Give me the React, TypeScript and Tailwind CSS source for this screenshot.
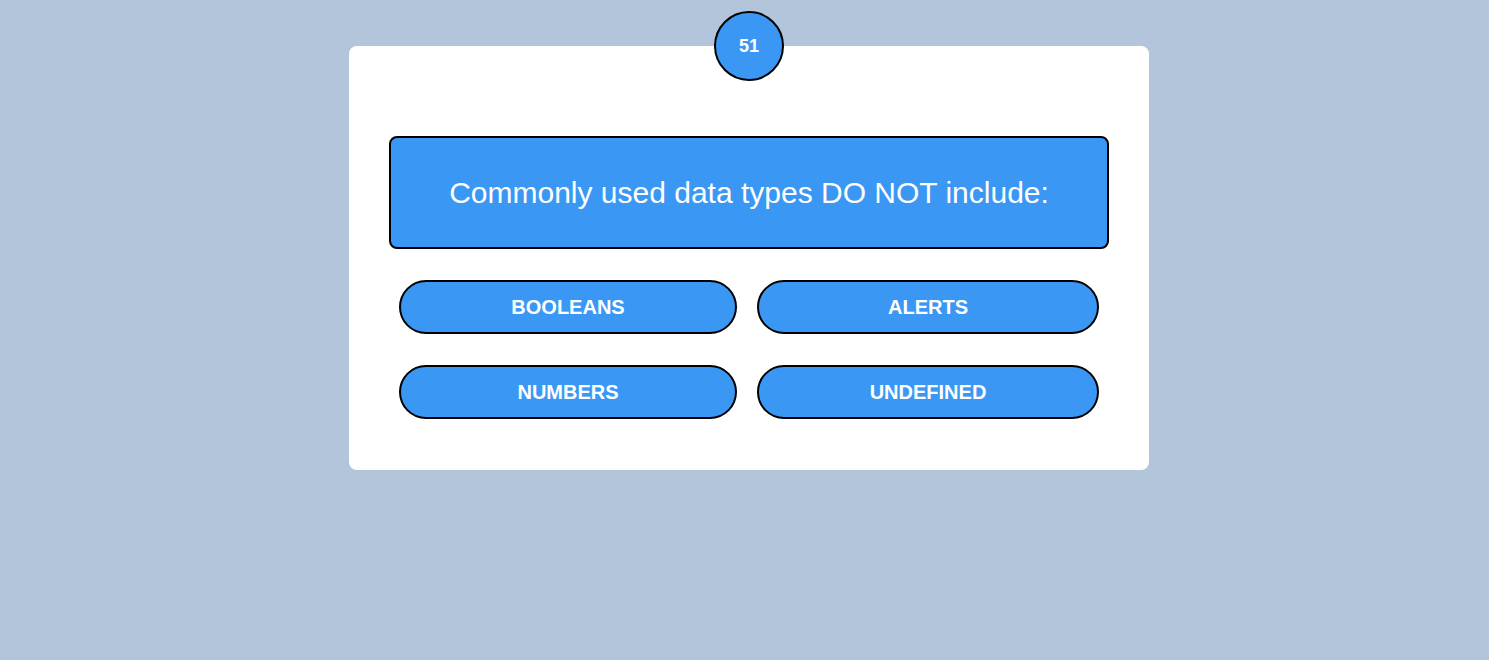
import React from 'react';

const answers = ['BOOLEANS', 'ALERTS', 'NUMBERS', 'UNDEFINED'];

const App: React.FC = () => {
  return (
    <div className="min-h-screen w-full bg-[#b3c5da] pt-[46px] font-['Liberation_Sans',Arial,sans-serif]">
      <div className="relative ml-[349px] w-[800px] rounded-lg bg-white px-10 pb-[51px] pt-[90px]">
        <div className="absolute left-1/2 top-[-35px] flex h-[70px] w-[70px] -translate-x-1/2 items-center justify-center rounded-full border-2 border-black bg-[#3b97f4] pt-px text-[18px] font-bold text-white">
          51
        </div>

        <div className="flex h-[113px] items-center justify-center rounded-lg border-2 border-black bg-[#3b97f4] text-[30px] text-white">
          Commonly used data types DO NOT include:
        </div>

        <div className="mt-[31px] grid grid-cols-[338px_342px] gap-x-5 gap-y-[31px] px-[10px]">
          {answers.map((a) => (
            <button
              key={a}
              className="flex h-[54px] items-center justify-center rounded-full border-2 border-black bg-[#3b97f4] text-[20px] font-bold text-white"
            >
              {a}
            </button>
          ))}
        </div>
      </div>
    </div>
  );
};

export default App;
